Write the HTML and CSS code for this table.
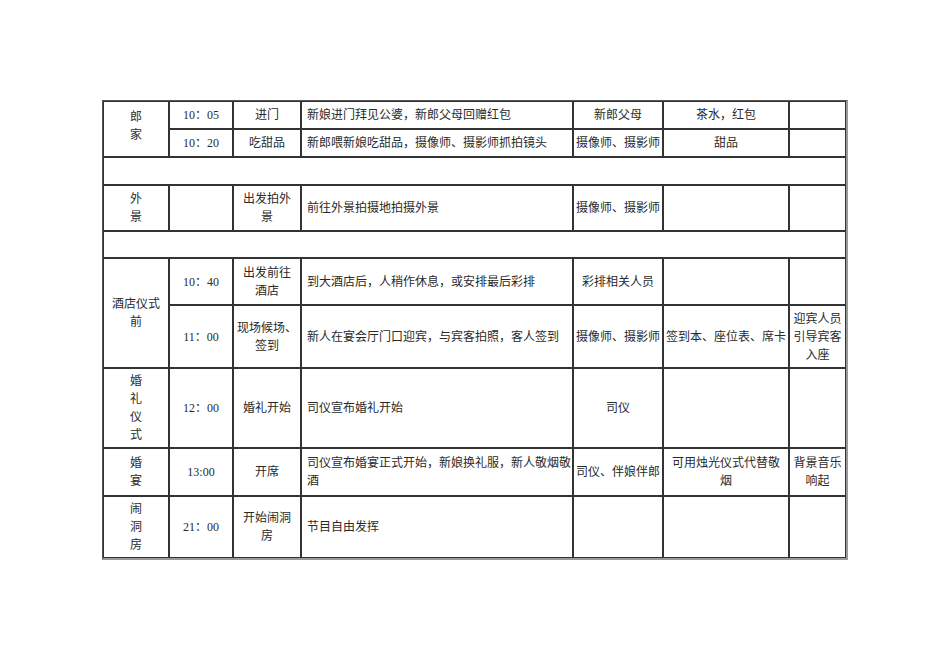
FILE: index.html
```html
<!DOCTYPE html>
<html lang="zh-CN">
<head>
<meta charset="utf-8">
<title>婚礼流程</title>
<link rel="stylesheet" href="styles.css">
</head>
<body>
<div class="page">
<table class="plan">
  <colgroup>
    <col class="c1"><col class="c2"><col class="c3"><col class="c4"><col class="c5"><col class="c6"><col class="c7">
  </colgroup>
  <tbody>
    <tr class="h28">
      <td rowspan="2" class="top">郎<br>家</td>
      <td>10：05</td>
      <td>进门</td>
      <td class="desc">新娘进门拜见公婆，新郎父母回赠红包</td>
      <td>新郎父母</td>
      <td>茶水，红包</td>
      <td></td>
    </tr>
    <tr class="h28">
      <td>10：20</td>
      <td>吃甜品</td>
      <td class="desc">新郎喂新娘吃甜品，摄像师、摄影师抓拍镜头</td>
      <td>摄像师、摄影师</td>
      <td>甜品</td>
      <td></td>
    </tr>
    <tr class="h28"><td colspan="7"></td></tr>
    <tr class="h46">
      <td>外<br>景</td>
      <td></td>
      <td>出发拍外<br>景</td>
      <td class="desc">前往外景拍摄地拍摄外景</td>
      <td>摄像师、摄影师</td>
      <td></td>
      <td></td>
    </tr>
    <tr class="h27"><td colspan="7"></td></tr>
    <tr class="h47">
      <td rowspan="2">酒店仪式<br>前</td>
      <td>10：40</td>
      <td>出发前往<br>酒店</td>
      <td class="desc">到大酒店后，人稍作休息，或安排最后彩排</td>
      <td>彩排相关人员</td>
      <td></td>
      <td></td>
    </tr>
    <tr class="h63">
      <td>11：00</td>
      <td>现场候场、<br>签到</td>
      <td class="desc">新人在宴会厅门口迎宾，与宾客拍照，客人签到</td>
      <td>摄像师、摄影师</td>
      <td>签到本、座位表、席卡</td>
      <td>迎宾人员<br>引导宾客<br>入座</td>
    </tr>
    <tr class="h80">
      <td>婚<br>礼<br>仪<br>式</td>
      <td>12：00</td>
      <td>婚礼开始</td>
      <td class="desc">司仪宣布婚礼开始</td>
      <td>司仪</td>
      <td></td>
      <td></td>
    </tr>
    <tr class="h48">
      <td>婚<br>宴</td>
      <td>13:00</td>
      <td>开席</td>
      <td class="desc">司仪宣布婚宴正式开始，新娘换礼服，新人敬烟敬<br>酒</td>
      <td>司仪、伴娘伴郎</td>
      <td>可用烛光仪式代替敬<br>烟</td>
      <td>背景音乐<br>响起</td>
    </tr>
    <tr class="h62">
      <td>闹<br>洞<br>房</td>
      <td>21：00</td>
      <td>开始闹洞<br>房</td>
      <td class="desc">节目自由发挥</td>
      <td></td>
      <td></td>
      <td></td>
    </tr>
  </tbody>
</table>
</div>
</body>
</html>
```
FILE: styles.css
```css
html, body {
  margin: 0;
  padding: 0;
  background: #ffffff;
}

.page {
  padding: 100px 0 0 102px;
}

.plan {
  table-layout: fixed;
  width: 746px;
  border-collapse: separate;
  border-spacing: 0;
  border-left: 1px solid #555;
  border-top: 1px solid #555;
  border-right: 2px solid #9a9a9a;
  border-bottom: 2px solid #9a9a9a;
  font-family: "Liberation Serif", "Noto Sans CJK SC", serif;
  font-size: 12px;
  line-height: 18px;
  color: #2a2a2a;
}

.c1 { width: 66px; }
.c2 { width: 64px; }
.c3 { width: 68px; }
.c4 { width: 272px; }
.c5 { width: 90px; }
.c6 { width: 126px; }
.c7 { width: 57px; }

.plan td {
  border: 1px solid #333;
  padding: 0 1px;
  text-align: center;
  vertical-align: middle;
  white-space: nowrap;
  overflow: hidden;
}

.plan td.desc {
  text-align: left;
  padding-left: 5px;
}

.plan td.top {
  vertical-align: top;
  padding-top: 6px;
}

.h27 { height: 27px; }
.h28 { height: 28px; }
.h46 { height: 46px; }
.h47 { height: 47px; }
.h48 { height: 48px; }
.h62 { height: 62px; }
.h63 { height: 63px; }
.h80 { height: 80px; }
```
